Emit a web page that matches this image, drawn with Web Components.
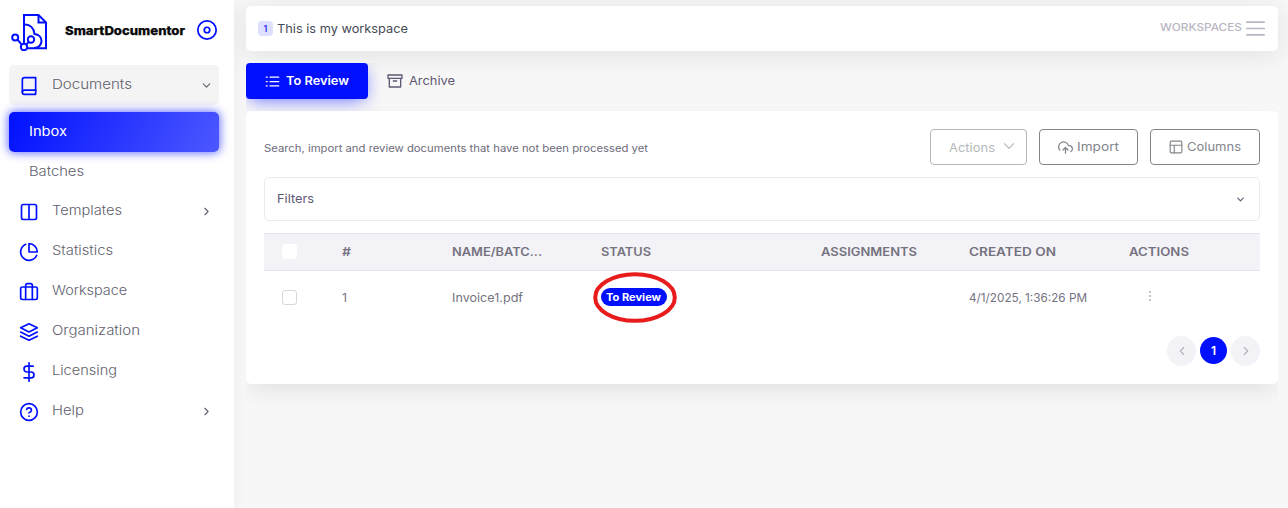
<!DOCTYPE html>
<html lang="en">
<head>
<meta charset="utf-8">
<title>SmartDocumentor</title>
<style>
html,body{margin:0;height:100%;overflow:hidden;background:#f7f7f7;font-family:Inter,"Open Sans",sans-serif;color:#6e6b7b}
</style>
</head>
<body>
<sd-app></sd-app>
<script>
const define=(name,css,html,setup)=>{
  const t=document.createElement('template');
  t.innerHTML=`<style>:host{display:block;box-sizing:border-box}*{box-sizing:border-box}${css}</style>${html}`;
  customElements.define(name,class extends HTMLElement{
    constructor(){super();this.attachShadow({mode:'open'}).append(t.content.cloneNode(true));}
    connectedCallback(){if(setup)setup(this,this.shadowRoot);}
  });
};
const ICONS={
  book:'<path d="M4 19.5A2.5 2.5 0 0 1 6.5 17H20"/><path d="M6.5 2H20v20H6.5A2.5 2.5 0 0 1 4 19.5v-15A2.5 2.5 0 0 1 6.5 2z"/>',
  columns:'<path d="M12 3h7a2 2 0 0 1 2 2v14a2 2 0 0 1-2 2h-7m0-18H5a2 2 0 0 0-2 2v14a2 2 0 0 0 2 2h7m0-18v18"/>',
  pie:'<path d="M21.21 15.89A10 10 0 1 1 8 2.83"/><path d="M22 12A10 10 0 0 0 12 2v10z"/>',
  briefcase:'<rect x="2" y="6" width="20" height="15" rx="2"/><path d="M16 21V4a2 2 0 0 0-2-2h-4a2 2 0 0 0-2 2v17"/>',
  layers:'<path d="M12 2 2 7l10 5 10-5zM2 17l10 5 10-5M2 12l10 5 10-5"/>',
  dollar:'<path d="M12 1v22M17 5H9.5a3.5 3.5 0 0 0 0 7h5a3.5 3.5 0 0 1 0 7H6"/>',
  help:'<circle cx="12" cy="12" r="10"/><path d="M9.09 9a3 3 0 0 1 5.83 1c0 2-3 3-3 3M12 17h.01"/>',
  disc:'<circle cx="12" cy="12" r="10"/><circle cx="12" cy="12" r="3"/>',
  right:'<path d="m9 18 6-6-6-6"/>',
  left:'<path d="m15 18-6-6 6-6"/>',
  down:'<path d="m6 9 6 6 6-6"/>',
  wide:'<path d="m4 8 8 8 8-8"/>',
  list:'<path d="M8 5h14M8 12h14M8 19h14M2 5h1.5M2 12h1.5M2 19h1.5"/>',
  archive:'<path d="M3.5 8v13h17V8M1.5 3h21v5h-21zM9.5 12h5"/>',
  menu:'<path d="M1 4h22M1 12h22M1 20h22"/>',
  upload:'<path d="m16 16-4-4-4 4M12 12v9"/><path d="M20.39 18.39A5 5 0 0 0 18 9h-1.26A8 8 0 1 0 3 16.3"/>',
  layout:'<rect x="2" y="2" width="20" height="20" rx="2"/><path d="M2 9h20M9 22V9"/>',
  dots:'<path d="M12 4h.01M12 12h.01M12 20h.01"/>'
};
define('sd-icon',':host{display:block;flex:none}svg{display:block;width:100%;height:100%;fill:none;stroke:currentColor;stroke-linecap:round;stroke-linejoin:round}','<svg viewBox="0 0 24 24"></svg>',(h,r)=>{
  const s=h.getAttribute('size')||'20';
  h.style.width=s+'px';h.style.height=s+'px';
  const g=r.querySelector('svg');
  g.style.strokeWidth=h.getAttribute('stroke')||'2';
  g.innerHTML=ICONS[h.getAttribute('name')];
});
/* Label whose glyphs are stretched to a set advance width. */
define('sd-label',':host{display:block;flex:none;white-space:nowrap}span{display:inline-block;transform-origin:0 50%}','<span><slot></slot></span>',(h,r)=>{
  const w=+h.getAttribute('w'),s=r.querySelector('span');
  const natural=s.offsetWidth?s.getBoundingClientRect().width:0;
  h.style.width=w+'px';
  if(natural)s.style.transform=`scaleX(${w/natural})`;
});
define('sd-logo',':host{width:38px;height:38px;flex:none}svg{display:block}',`
<svg width="38" height="38" viewBox="0 0 38 38" fill="none" stroke="#0010ff" stroke-width="2">
<path d="M13 31V2h14.500L35 9.500V35.200H16"/><path d="M27.500 2v7.500H35"/>
<path d="M13.500 11.500c6 0 9.500 4 10 9.500 4.500.5 7 3.500 7 7 0 4-3 7-7.500 7"/>
<circle cx="4.200" cy="24.500" r="3"/><circle cx="20" cy="26.500" r="3.200" fill="#fff"/><circle cx="13" cy="34" r="3.200" fill="#fff"/><path d="m6.500 26.600 4.200 5M15.200 31.600l2.600-2.800"/>
</svg>`);
define('sd-nav-item',`
:host{display:flex;align-items:center;height:40px;margin:0 15px 0 9px;padding:0 6px 0 10px;border-radius:5px;font-size:12.900px;font-weight:300;color:#625f6e}
sd-icon.i{color:#0010ff;margin:2px 13px 0 0}.grow{flex:1}
sd-icon.c{margin-top:1px}
::slotted(sd-label){position:relative;margin-bottom:1px}
:host([open]){background:#f4f4f4;margin-bottom:7px}
:host([sub]){padding-left:20px;height:39px}
:host([active]){height:40px;color:#fff;font-weight:400;background:linear-gradient(118deg,#0010ff,#4d58ff);box-shadow:0 0 10px 1px rgba(0,16,255,.6)}`,
'<slot></slot><span class="grow"></span>',(h,r)=>{
  const i=h.getAttribute('icon'),c=h.getAttribute('chevron');
  if(i)r.querySelector('slot').insertAdjacentHTML('beforebegin',`<sd-icon class="i" name="${i}"></sd-icon>`);
  if(c)r.querySelector('.grow').insertAdjacentHTML('afterend',`<sd-icon class="c" name="${c}" size="13" stroke="2"></sd-icon>`);
});
define('sd-sidebar',`
:host{width:234px;height:508px;background:#fff;box-shadow:0 0 15px rgba(34,41,47,.05);position:relative;z-index:2}
header{display:flex;align-items:center;height:65px;padding:0 0 4px 11px}
sd-logo{margin:3px 16px 0 0}
.brand{font-size:12.300px;font-weight:800;color:#080808;-webkit-text-stroke:.25px #080808;margin-right:11px}
sd-icon{color:#0010ff;margin-top:-1px}`,`
<header><sd-logo></sd-logo><sd-label class="brand" w="120">SmartDocumentor</sd-label><sd-icon name="disc" size="22" stroke="1.9"></sd-icon></header>
<nav>
<sd-nav-item open icon="book" chevron="down"><sd-label w="80">Documents</sd-label></sd-nav-item>
<sd-nav-item sub active><sd-label w="38">Inbox</sd-label></sd-nav-item>
<sd-nav-item sub><sd-label w="55">Batches</sd-label></sd-nav-item>
<sd-nav-item icon="columns" chevron="right"><sd-label w="70">Templates</sd-label></sd-nav-item>
<sd-nav-item icon="pie"><sd-label w="61">Statistics</sd-label></sd-nav-item>
<sd-nav-item icon="briefcase"><sd-label w="75">Workspace</sd-label></sd-nav-item>
<sd-nav-item icon="layers"><sd-label w="88">Organization</sd-label></sd-nav-item>
<sd-nav-item icon="dollar"><sd-label w="65">Licensing</sd-label></sd-nav-item>
<sd-nav-item icon="help" chevron="right"><sd-label w="32">Help</sd-label></sd-nav-item>
</nav>`);
define('sd-topbar',`
:host{display:flex;align-items:center;height:45px;margin:6px 10px 0 12px;padding:0 13px 0 12px;background:#fff;border-radius:5px;box-shadow:0 4px 24px rgba(34,41,47,.1)}
.n{display:flex;align-items:center;justify-content:center;width:15px;height:15px;border-radius:4px;background:#dfe0ff;color:#2a30f0;font-size:9px;font-weight:600;margin-right:4px}
.t{font-size:12.200px;color:#464a56;margin-top:-1px}.g{flex:1}
.w{font-size:9.700px;font-weight:500;color:#b9b6c3;margin-right:4px;margin-top:-2px}sd-icon{color:#b9b6c3}`,
`<span class="n">1</span><sd-label class="t" w="131">This is my workspace</sd-label><span class="g"></span><sd-label class="w" w="82">WORKSPACES</sd-label><sd-icon name="menu" size="19" stroke="2.200"></sd-icon>`);
define('sd-tab',`
:host{display:flex;align-items:center;height:36px;padding:0 19px;gap:5.500px;border-radius:4px;font-size:12.200px;color:#5e5873}
::slotted(sd-label){margin-top:-1px}
:host([active]){width:122px;background:#0010ff;color:#fff;font-weight:600;box-shadow:0 4px 18px -4px rgba(0,16,255,.65)}`,
'<slot></slot>');
define('sd-button',`
:host{display:flex;align-items:center;justify-content:center;gap:4px;height:36px;border:1px solid #82868b;border-radius:4px;font-size:12.200px;color:#82868b}
::slotted(sd-label){margin-top:-1px}
:host([disabled]){color:#b6b8bb;border-color:#b4b6b9;justify-content:flex-start;padding-left:18px}`,'<slot></slot>');
define('sd-badge',':host{display:flex;align-items:center;justify-content:center;width:66px;height:18px;margin-top:-1px;border-radius:9px;background:#0010ff;color:#fff;font-size:9.900px;font-weight:700}::slotted(sd-label){margin-top:-1px;margin-right:1px}','<slot></slot>');
define('sd-check',':host{width:15px;height:15px;margin-top:-1px;background:#fff;border:1px solid #d8d6de;border-radius:3px}:host([plain]){border-color:#fff}','');
define('sd-row',`
:host{display:grid;grid-template-columns:60px 110px 149px 220px 148px 160px 149px;align-items:center;height:53px;font-size:12px;color:#75727f}
:host([head]){height:38px;background:#f3f2f7;border:solid #e5e4ee;border-width:1px 0;font-size:11.600px;font-weight:600}
::slotted(*){margin-left:18px}`,'<slot></slot>');
define('sd-table',`
:host{position:relative;margin-top:12px}
.mark{position:absolute;left:329px;top:39px;width:84px;height:51px}
sd-icon{color:#6e6b7b}`,`
<sd-row head><sd-check plain></sd-check><sd-label w="9">#</sd-label><sd-label w="90">NAME/BATC...</sd-label><sd-label w="50">STATUS</sd-label><sd-label w="96">ASSIGNMENTS</sd-label><sd-label w="87">CREATED ON</sd-label><sd-label w="60">ACTIONS</sd-label></sd-row>
<sd-row><sd-check></sd-check><sd-label w="5">1</sd-label><sd-label w="71">Invoice1.pdf</sd-label><sd-badge><sd-label w="55">To Review</sd-label></sd-badge><span></span><sd-label w="118">4/1/2025, 1:36:26 PM</sd-label><sd-icon name="dots" size="12" stroke="3" style="margin-left:33px;margin-top:-3px"></sd-icon></sd-row>
<svg class="mark" viewBox="0 0 84 51"><ellipse cx="42" cy="25.500" rx="39.800" ry="23.300" fill="none" stroke="#e81c1c" stroke-width="4"/></svg>`);
define('sd-pager',`
:host{display:flex;justify-content:flex-end;align-items:center;gap:4px;margin-top:12px;height:30px}
span{display:flex;align-items:center;justify-content:center;width:29px;height:30px;border-radius:15px;background:#f3f2f7;color:#b5b2be}
.on{width:27px;height:27px;background:#0010ff;color:#fff;font-size:12px;font-weight:600;margin-top:-1px}`,
'<span><sd-icon name="left" size="14" stroke="2"></sd-icon></span><span class="on">1</span><span><sd-icon name="right" size="14" stroke="2"></sd-icon></span>');
define('sd-card',`
:host{height:273px;margin-top:12px;padding:18px;background:#fff;border-radius:5px;box-shadow:0 10px 22px -4px rgba(34,41,47,.1);position:relative}
.tools{display:flex;align-items:center;gap:12px}.tools .d{font-size:9.800px;margin-right:auto;margin-top:2px}
.filters{display:flex;align-items:center;justify-content:space-between;height:44px;margin-top:12px;padding:0 13px 0 12px;border:1px solid #ebe9f1;border-radius:5px;font-size:12px;color:#5e5873}.filters sd-label{margin-top:-1px}`,`
<div class="tools"><sd-label class="d" w="384">Search, import and review documents that have not been processed yet</sd-label>
<sd-button disabled style="width:97px"><sd-label w="46" style="margin:1px 3px 0 0">Actions</sd-label><sd-icon name="wide" size="14" stroke="2" style="margin-top:-2px"></sd-icon></sd-button>
<sd-button style="width:99px"><sd-icon name="upload" size="15"></sd-icon><sd-label w="42">Import</sd-label></sd-button>
<sd-button style="width:110px"><sd-icon name="layout" size="14"></sd-icon><sd-label w="54">Columns</sd-label></sd-button></div>
<div class="filters"><sd-label w="37">Filters</sd-label><sd-icon name="down" size="11" stroke="2.500"></sd-icon></div>
<sd-table></sd-table><sd-pager></sd-pager>`);
define('sd-main',`
:host{flex:1}
.content{height:385px;margin:12px 10px 0 12px;overflow:hidden}.tabs{display:flex}`,`
<sd-topbar></sd-topbar>
<div class="content"><div class="tabs"><sd-tab active><sd-icon name="list" size="15"></sd-icon><sd-label w="63">To Review</sd-label></sd-tab><sd-tab><sd-icon name="archive" size="16"></sd-icon><sd-label w="46">Archive</sd-label></sd-tab></div><sd-card></sd-card></div>`);
define('sd-app',':host{display:flex;width:1288px;height:508px;overflow:hidden}','<sd-sidebar></sd-sidebar><sd-main></sd-main>');
</script>
</body>
</html>
